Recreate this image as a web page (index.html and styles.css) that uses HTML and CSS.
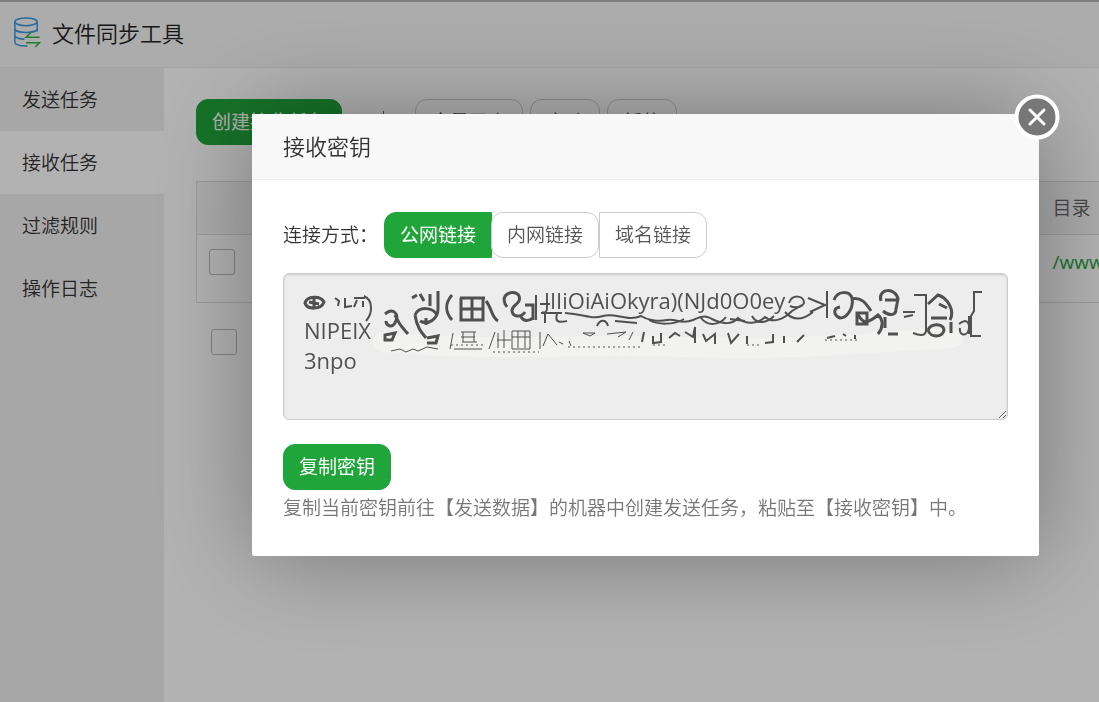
FILE: index.html
```html
<!DOCTYPE html>
<html lang="zh-CN">
<head>
    <meta charset="UTF-8">
    <meta name="viewport" content="width=device-width, initial-scale=1.0">
    <title>文件同步工具</title>
    <link rel="stylesheet" href="styles.css">
</head>
<body>
    <div class="app">
        <header class="app-header">
            <svg class="logo" viewBox="0 0 28 32" fill="none" stroke-width="1.6">
                <g stroke="#3a9be0">
                    <ellipse cx="13" cy="5" rx="11.5" ry="4"/>
                    <path d="M1.5 5v21c0 2 4 4 11 4h2M24.500 5v10M1.500 12c0 2 4 4 11.500 4s11.500-2 11.500-4M1.500 19c0 2 4 4 10 4"/>
                </g>
                <path stroke="#36b34a" d="M27 21H13l5-5M13 26.500H27l-4.500 4.500"/>
            </svg>
            <span class="app-title">文件同步工具</span>
        </header>
        <div class="app-body">
            <nav class="sidebar">
                <a href="#send">发送任务</a>
                <a href="#receive" class="active">接收任务</a>
                <a href="#filter">过滤规则</a>
                <a href="#logs">操作日志</a>
            </nav>
            <main class="content">
                <div class="toolbar">
                    <button class="btn btn-green">创建接收任务</button>
                    <span class="divider"></span>
                    <div class="toolbar-group">
                        <button class="btn">全量同步</button>
                        <button class="btn">启动</button>
                        <button class="btn">暂停</button>
                    </div>
                </div>
                <table class="task-table">
                    <thead>
                        <tr><th class="col-check"></th><th class="col-name"></th><th>目录</th></tr>
                    </thead>
                    <tbody>
                        <tr>
                            <td class="col-check"><input type="checkbox" aria-label="选择任务"></td>
                            <td class="col-name"></td>
                            <td><a href="#dir">/www/wwwroot</a></td>
                        </tr>
                    </tbody>
                </table>
                <div class="table-footer"><input type="checkbox" aria-label="全选"></div>
            </main>
        </div>
    </div>

    <div class="mask">
        <section class="modal" role="dialog" aria-labelledby="modalTitle">
            <button class="close" aria-label="关闭">
                <svg viewBox="0 0 46 46">
                    <circle cx="23" cy="23" r="20.500" fill="#777" stroke="#fff" stroke-width="4"/>
                    <path d="M16 16l14 14M30 16L16 30" stroke="#fff" stroke-width="3" stroke-linecap="round"/>
                </svg>
            </button>
            <h2 id="modalTitle" class="modal-title">接收密钥</h2>
            <div class="modal-body">
                <div class="link-row">
                    <span class="link-label">连接方式：</span>
                    <div class="link-tabs">
                        <button class="btn btn-green tab-first">公网链接</button>
                        <button class="btn tab-middle">内网链接</button>
                        <button class="btn tab-last">域名链接</button>
                    </div>
                </div>
                <div class="key-box">
                    <textarea class="key" aria-label="接收密钥" readonly>                                          JIIiOiAiOkyra)(NJd0O0ey
NIPEIX
3npo</textarea>
                    <!-- smeared part of the key -->
                    <svg class="smear" viewBox="0 0 690 90" fill="none" stroke="#505050" stroke-width="2" aria-hidden="true">
                        <path stroke="#f5f5f2" stroke-width="20" stroke-linecap="round" opacity=".6" d="M80 54C180 64 290 55 380 59S550 56 650 50"/>
                        <g>
                            <path d="M2 15c2-7 15-8 19-1-3 8-17 8-19 1zM6 14l10 2M11 9v10" stroke-width="3"/>
                            <path d="M32 10l4 3-1 5M42 10v9l7-1M51 10h11M54 12l-3 7M60 13v6"/>
                            <path d="M61 8c9 4 9 17 2 25"/>
                            <path d="M82 26c8-7 15 0 10 9-3 5-9 3-9-2M92 27c5 12 10 15 13 19M82 47l10-2-3 7h-7z" stroke-width="3"/>
                            <path d="M109 10l5-3M117 6l4 7M127 6v12M135 3v18c0 9-9 17-18 12M112 27c4-9 18-8 22 0M112 27c2 13 7 18 11 23M123 30v7M118 34h9M124 50l11-2-2 7h-9" stroke-width="3"/>
                            <path d="M149 7c-7 8-7 17 0 25M157 10h25M158 10v22h22V11M158 21h22M169 11v20M183 13c6 7 5 16 12 20" stroke-width="3"/>
                            <path d="M204 19c-10-14 9-18 12-11 3 8-8 9-7 15 1 6 9 7 13 1M222 17h8v15M218 29c3 5 8 4 12 1" stroke-width="3"/>
                            <path d="M233 7v25M237 16h10M238 25h21M242 25v10M254 26c-3 10 5 8 10 7"/>
                        </g>
                        <path d="M262 25c20 1 26 7 38 3s24 6 38 0c6 4 17 6 26 4s14 5 26 0 13-4 21 0 18 5 24-2c8 7 20 6 27-1 8 7 19 2 27-6l10-6" stroke-width="2"/>
                        <path d="M294 38c3-7 9-7 11 0M312 33l22 2M346 32c9 5 25 5 35-1M398 30c6 8 18 8 25-1M427 31l15 2M449 28c4 8 14 8 22 0M482 24c8 9 18 8 28 0"/>
                        <path d="M486 15c3-9 15-8 15 0-2 5-10 5-14 3M505 10l17 7-15 7M524 3v27"/>
                        <g stroke-width="3">
                            <path d="M531 12c3-9 15-10 18-2 2 10-5 20-12 20-7-3-7-10 0-11M548 11c11-3 16 6 20 12M554 25h10v11h-10zM554 25c5 9 8 13 21 2 6 5 5 13 0 19"/>
                            <path d="M578 13c-4-13 15-14 17-2l-2 10c0 7-7 7-13 2M582 12h13M582 29v11M585 46h10"/>
                            <path d="M600 24h12M601 29l9-2M611 7h12v36c-1 6-8 4-13 2" stroke-width="2"/>
                            <path d="M625 16l10-9c10 3 17 16 12 25M628 30h16M636 16l8 4M625 42c3-7 15-7 16 0-1 8-14 8-16 0M648 34v11"/>
                            <path d="M656 36c8-7 12 0 9 8-4 5-9 2-8-4M666 28v18" stroke-width="2"/>
                            <path d="M679 4h-8v19l-3 5v20h10" stroke-width="2"/>
                        </g>
                        <g stroke-width="1">
                            <path d="M88 63l9-2 6 3 7-3 5 2 9-4 11 2M150 45l-3 16M158 44h15M158 49h14M159 54h15M160 44v10M171 44v10M151 61h28M192 44l-6 17M195 45v15M194 52h14M201 42v18M209 43h18v18h-18zM209 49h18M215 43v17M222 43v17"/>
                            <path d="M237 44v17M245 46l-5 12M245 46l9 11M256 54l4 2M266 53l2 5M280 45h12l-5 3zM304 46l19-2-8 5M330 44l-4 8"/>
                            <path stroke-width="2" d="M341 44l-2 10M350 48v7l8-1v-9M366 50l6-5 5 3M382 44l8 5 2-10v16M400 46l3 7 9-7v10M425 45l3 10 8-9M444 48v8M462 55l8-1v-8M481 55v-7M494 54l7-7M524 50l8-2M540 46l3 2M552 47v4"/>
                            <path stroke-dasharray="2 3" d="M148 57h32M190 64h46M265 59h75M350 57h12M444 57h15M522 52h34"/>
                        </g>
                    </svg>
                </div>
                <button class="btn btn-green">复制密钥</button>
                <p class="tip">复制当前密钥前往【发送数据】的机器中创建发送任务，粘贴至【接收密钥】中。</p>
            </div>
        </section>
    </div>
</body>
</html>
```
FILE: styles.css
```css
* {
    box-sizing: border-box;
}

body {
    margin: 0;
    height: 100vh;
    overflow: hidden;
    font-family: "Open Sans", "Noto Sans CJK SC", sans-serif;
    font-size: 19px;
    font-weight: 350;
    line-height: 28px;
    color: #333;
    background: #fff;
}

button, input, textarea {
    font: inherit;
}

.app {
    display: flex;
    flex-direction: column;
    height: 100%;
    border-top: 2px solid #b5b5b5;
}

.app-header {
    display: flex;
    align-items: center;
    gap: 11px;
    height: 66px;
    padding: 0 13px 4px;
    background: #f7f7f7;
    border-bottom: 1px solid #eaeaea;
}

.logo {
    width: 28px;
    height: 31px;
}

.app-title {
    font-size: 22px;
    color: #222;
}

.app-body {
    display: flex;
    flex: 1;
}

.sidebar {
    width: 164px;
    background: #f0f0f0;
}

.sidebar a {
    display: block;
    padding: 18px 22px 17px;
    color: #333;
    text-decoration: none;
}

.sidebar a.active {
    background: #fff;
}

.content {
    flex: 1;
    min-width: 0;
    padding: 31px 0 0 32px;
    overflow: hidden;
}

.toolbar {
    display: flex;
    align-items: center;
}

.toolbar-group {
    display: flex;
    gap: 7px;
}

.divider {
    width: 1px;
    height: 22px;
    margin: 0 31px 0 41px;
    background: #666;
}

.btn {
    height: 46px;
    padding: 0 15px;
    border: 1px solid #ccc;
    border-radius: 12px;
    background: #fff;
    color: #555;
    white-space: nowrap;
    cursor: pointer;
}

.btn-green {
    border-color: #20a53a;
    background: #20a53a;
    color: #fff;
    font-weight: 400;
}

.task-table {
    width: 100%;
    min-width: 1200px;
    margin-top: 36px;
    border: 1px solid #ddd;
    border-collapse: collapse;
    table-layout: fixed;
}

.task-table th {
    height: 53px;
    padding: 0 12px;
    background: #f6f6f6;
    border-bottom: 1px solid #ddd;
    color: #666;
    font-weight: 350;
    text-align: left;
}

.task-table td {
    height: 68px;
    padding: 0 12px;
}

.task-table td a {
    color: #20a53a;
    font-weight: 400;
    text-decoration: none;
}

.task-table .col-check {
    width: 60px;
}

.task-table .col-name {
    width: 784px;
}

.task-table td:last-child,
.task-table td:first-child {
    padding-bottom: 14px;
}

input[type="checkbox"] {
    appearance: none;
    display: block;
    width: 26px;
    height: 26px;
    margin: 0;
    border: 1px solid #bbb;
    border-radius: 3px;
}

.table-footer {
    padding: 26px 15px;
}

.mask {
    position: fixed;
    inset: 0;
    padding: 114px 60px 0 252px;
    background: rgba(0, 0, 0, 0.3);
}

.modal {
    position: relative;
    background: #fff;
    border-radius: 2px;
    box-shadow: 1px 1px 100px rgba(0, 0, 0, 0.35);
}

.close {
    position: absolute;
    top: -20px;
    right: -21px;
    width: 46px;
    height: 46px;
    padding: 0;
    border: 0;
    background: none;
    cursor: pointer;
}

.close svg {
    display: block;
}

.modal-title {
    height: 66px;
    margin: 0;
    padding: 0 31px;
    background: #f8f8f8;
    border-bottom: 1px solid #eee;
    font-size: 22px;
    font-weight: 350;
    line-height: 64px;
}

.modal-body {
    padding: 32px 31px 34px;
}

.link-row {
    display: flex;
    align-items: center;
    margin-bottom: 15px;
}

.link-label {
    margin-right: 6px;
}

.link-tabs {
    display: flex;
}

.tab-first {
    border-radius: 12px 0 0 12px;
}

.tab-middle {
    margin-left: -1px;
}

.tab-last {
    border-radius: 0 12px 12px 0;
}

.key-box {
    position: relative;
    margin-bottom: 24px;
}

.key {
    display: block;
    width: 100%;
    height: 147px;
    padding: 11px 20px;
    border: 1px solid #ccc;
    border-radius: 6px;
    background: #ededed;
    box-shadow: inset 0 1px 2px rgba(0, 0, 0, 0.15);
    color: #505050;
    font-size: 22px;
    font-weight: 400;
    line-height: 30px;
    overflow: hidden;
    resize: both;
}

.smear {
    position: absolute;
    top: 15px;
    left: 20px;
    width: 690px;
    height: 90px;
    pointer-events: none;
}

.tip {
    margin: 4px 0 0;
    color: #777;
}
```
